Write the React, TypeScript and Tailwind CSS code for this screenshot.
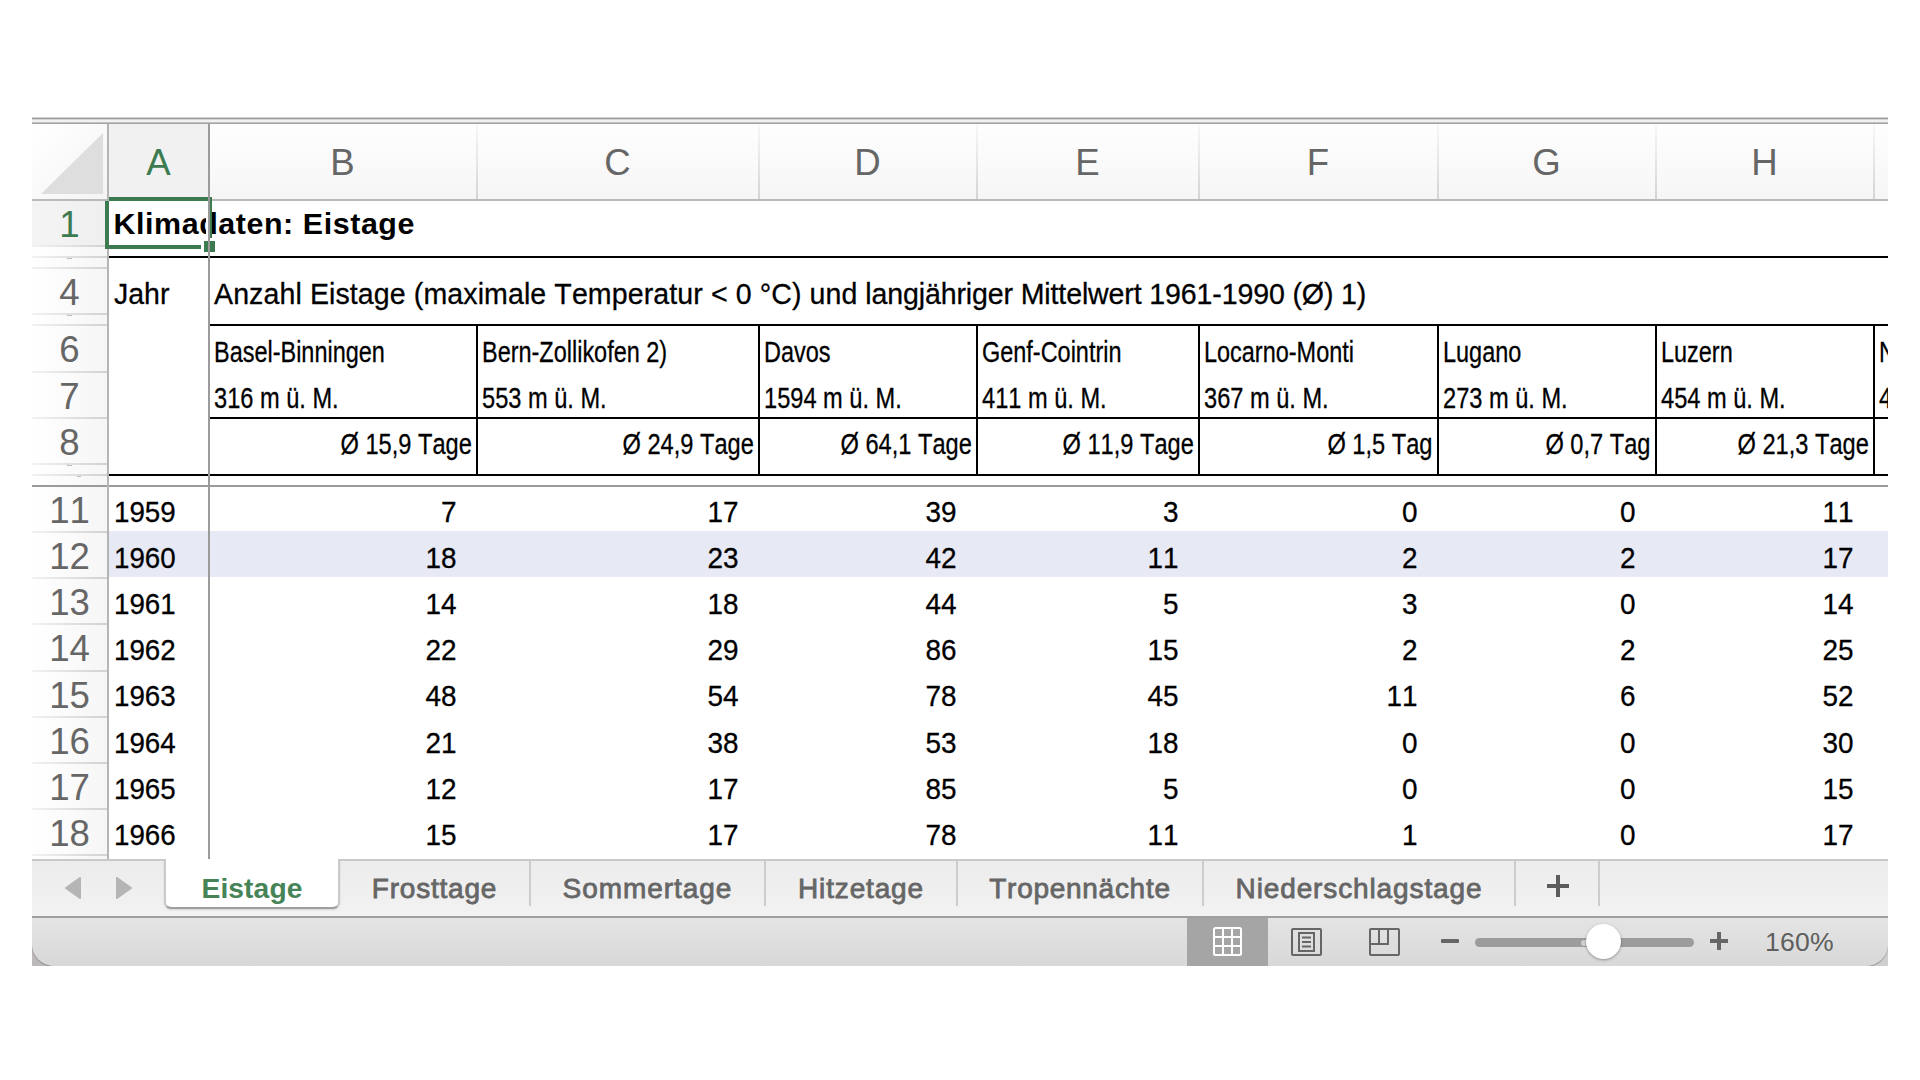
const stations = [
  { col: "B", name: "Basel-Binningen", alt: "316 m ü. M.", mean: "Ø 15,9 Tage", w: "w-[268px]", values: [7, 18, 14, 22, 48, 21, 12, 15] },
  { col: "C", name: "Bern-Zollikofen 2)", alt: "553 m ü. M.", mean: "Ø 24,9 Tage", w: "w-[282px]", values: [17, 23, 18, 29, 54, 38, 17, 17] },
  { col: "D", name: "Davos", alt: "1594 m ü. M.", mean: "Ø 64,1 Tage", w: "w-[218px]", values: [39, 42, 44, 86, 78, 53, 85, 78] },
  { col: "E", name: "Genf-Cointrin", alt: "411 m ü. M.", mean: "Ø 11,9 Tage", w: "w-[222px]", values: [3, 11, 5, 15, 45, 18, 5, 11] },
  { col: "F", name: "Locarno-Monti", alt: "367 m ü. M.", mean: "Ø 1,5 Tag", w: "w-[239px]", values: [0, 2, 3, 2, 11, 0, 0, 1] },
  { col: "G", name: "Lugano", alt: "273 m ü. M.", mean: "Ø 0,7 Tag", w: "w-[218px]", values: [0, 2, 0, 2, 6, 0, 0, 0] },
  { col: "H", name: "Luzern", alt: "454 m ü. M.", mean: "Ø 21,3 Tage", w: "w-[218px]", values: [11, 17, 14, 25, 52, 30, 15, 17] },
];

const years = [1959, 1960, 1961, 1962, 1963, 1964, 1965, 1966];

const tabs = [
  { label: "Frosttage", w: "w-[191px]", track: "tracking-[0.8px]" },
  { label: "Sommertage", w: "w-[235px]", track: "tracking-[0.95px]" },
  { label: "Hitzetage", w: "w-[192px]", track: "tracking-[0.85px]" },
  { label: "Tropennächte", w: "w-[246px]", track: "tracking-[0.72px]" },
  { label: "Niederschlagstage", w: "w-[312px]", track: "tracking-[0.88px]" },
];

const headFill = "bg-linear-to-b from-[#fefefe] to-[#f6f6f6]";

function RowNumber({ n, active, last, mark }: { n?: number; active?: boolean; last?: boolean; mark?: boolean }) {
  const size = n === undefined ? "h-[11px]" : n > 8 ? "h-[46.14px]" : n === 6 ? "h-[47px]" : "h-[46px]";
  const fill = active ? "bg-linear-to-r from-[#f4f4f4] to-[#efefef] text-[#3c7b4f]" : "bg-linear-to-r from-white to-[#f6f6f6] text-[#666]";
  return (
    <div className={`${size} ${fill} flex shrink-0 flex-col text-center text-[36.6px] leading-[47.5px]`}>
      <div className="min-h-0 flex-1 overflow-visible">
        {n}
        {mark && <div className="mx-auto h-px w-[5px] bg-[#bdbdbd]" />}
      </div>
      {!last && <div className="h-[2px] shrink-0 bg-linear-to-r from-[#f2f2f2] to-[#d2d2d2]" />}
    </div>
  );
}

function DataRows({ values, year }: { values: number[]; year?: boolean }) {
  return (
    <>
      {values.map((v, i) => (
        <div
          key={i}
          className={`${i === 0 ? "h-[44px] pt-[2px]" : "h-[46.14px] pt-[4px]"} ${i === 1 ? "bg-[#e7e9f5]" : ""} ${
            year ? "pl-[5px]" : "pr-[21.5px] text-right"
          } shrink-0 text-[30px] leading-[46px] [-webkit-text-stroke:0.3px_#000]`}
        >
          <div className={year ? "origin-left scale-x-[.925]" : "origin-right scale-x-[.93]"}>{v}</div>
        </div>
      ))}
    </>
  );
}

function StationHead({ name, alt, mean }: { name: string; alt: string; mean: string }) {
  return (
    <div className="flex h-[150px] flex-col overflow-hidden border-b-2 border-black text-[30px] leading-[46px] whitespace-nowrap [-webkit-text-stroke:0.3px_#000]">
      <div className="h-[93px] shrink-0 border-b-2 border-black pt-[3px] pl-[4px]">
        <div className="origin-left scale-x-[.782]">{name}</div>
        <div className="origin-left scale-x-[.787]">{alt}</div>
      </div>
      <div className="flex justify-end pt-[2px] pr-[4.5px]">
        <div className="origin-right scale-x-[.787]">{mean}</div>
      </div>
    </div>
  );
}

function Sheet() {
  return (
    <div className="flex h-[735px] overflow-hidden">
      {/* row numbers */}
      <div className="flex w-[75px] shrink-0 flex-col">
        <div className="flex h-[75px] shrink-0 justify-end bg-linear-to-br from-white to-[#f4f4f4] pt-[9px] pr-[4px]">
          <svg width="62" height="61" viewBox="0 0 62 61">
            <path d="M62 0V61H0Z" fill="#dedede" />
          </svg>
        </div>
        <div className="h-[2px] shrink-0 bg-[#bababa]" />
        <RowNumber n={1} active />
        <RowNumber />
        <RowNumber mark />
        <RowNumber n={4} />
        <RowNumber mark />
        <RowNumber n={6} />
        <RowNumber n={7} />
        <RowNumber n={8} />
        <RowNumber mark />
        <div className="h-[9px] shrink-0 bg-linear-to-r from-white to-[#f6f6f6] pl-[45px]">
          <div className="h-px w-[4px] bg-[#bdbdbd]" />
        </div>
        <div className="h-[2px] shrink-0 bg-[#9b9b9b]" />
        {years.map((y, i) => (
          <RowNumber key={y} n={11 + i} />
        ))}
        <RowNumber last />
      </div>
      <div className="w-[2px] shrink-0 bg-[#b5b5b5]" />

      {/* column A */}
      <div className="relative flex w-[99px] shrink-0 flex-col">
        <div className="h-[75px] shrink-0 bg-[#f1f1f1] text-center text-[36.6px] leading-[78px] text-[#3c7b4f]">A</div>
        <div className="h-[2px] shrink-0 bg-[#bababa]" />
        <div className="h-[57px] shrink-0 border-b-2 border-black">
          <div className="relative z-10 w-[400px] pl-[4.5px] text-[30.4px] leading-[45px] font-bold tracking-[0.58px] whitespace-nowrap">
            Klimadaten: Eistage
          </div>
        </div>
        <div className="h-[218px] shrink-0 border-b-2 border-black pt-[13px] pl-[4.5px] text-[30px] leading-[46px] [-webkit-text-stroke:0.3px_#000]">
          <div className="origin-left scale-x-[.95]">Jahr</div>
        </div>
        <div className="h-[9px] shrink-0" />
        <div className="h-[2px] shrink-0 bg-[#9b9b9b]" />
        <DataRows values={years} year />

        {/* cell selection */}
        <div className="absolute top-[73px] -left-[4px] z-20 h-[55px] w-[110px]">
          <div className="absolute top-0 left-[4px] h-[4px] w-[103px] bg-[#3c7b4f]" />
          <div className="absolute top-[4px] left-0 h-[48px] w-[4px] bg-[#3c7b4f]" />
          <div className="absolute top-[48px] left-0 h-[4px] w-[96px] bg-[#3c7b4f]" />
          <div className="absolute top-[4px] left-[101px] h-[38px] w-[2px] bg-white" />
          <div className="absolute top-0 left-[105px] h-[41px] w-[2px] bg-[#3c7b4f]" />
          <div className="absolute top-[44px] left-[99px] h-[11px] w-[11px] bg-[#3c7b4f]" />
          <div className="absolute top-0 left-[103px] h-[55px] w-[2px] bg-[#9b9b9b]" />
        </div>
      </div>
      <div className="w-[2px] shrink-0 bg-[#9b9b9b]" />

      {/* scrolling columns */}
      <div className="flex min-w-0 flex-1 flex-col overflow-hidden">
        <div className="flex h-[75px] shrink-0">
          {stations.map((s) => (
            <div key={s.col} className={`${s.w} ${headFill} flex shrink-0`}>
              <div className="flex-1 pr-px text-center text-[36.6px] leading-[78px] text-[#666]">{s.col}</div>
              <div className="w-[2px] bg-linear-to-b from-[#f8f8f8] to-[#d4d4d4]" />
            </div>
          ))}
          <div className={`flex-1 ${headFill}`} />
        </div>
        <div className="h-[2px] shrink-0 bg-[#bababa]" />
        <div className="h-[57px] shrink-0 border-b-2 border-black" />
        <div className="h-[68px] shrink-0 border-b-2 border-black pt-[13px] pl-[4px] text-[30px] leading-[46px] whitespace-nowrap [-webkit-text-stroke:0.3px_#000]">
          <div className="origin-left scale-x-[.951]">
            <span className="tracking-[0.11px]">Anzahl Eistage (maximale Temperatur &lt; 0 °C) und</span>
            <span className="tracking-[-0.13px]"> langjähriger Mittelwert 1961-1990 (Ø) 1)</span>
          </div>
        </div>
        <div className="flex h-[150px] shrink-0">
          {stations.map((s) => (
            <div key={s.col} className={`${s.w} shrink-0 border-r-2 border-black`}>
              <StationHead name={s.name} alt={s.alt} mean={s.mean} />
            </div>
          ))}
          <div className="min-w-0 flex-1 overflow-hidden">
            <StationHead name="N" alt="4" mean="" />
          </div>
        </div>
        <div className="h-[9px] shrink-0" />
        <div className="h-[2px] shrink-0 bg-[#9b9b9b]" />
        <div className="flex">
          {stations.map((s) => (
            <div key={s.col} className={`${s.w} flex shrink-0 flex-col`}>
              <DataRows values={s.values} />
            </div>
          ))}
          <div className="flex-1 pt-[44px]">
            <div className="h-[46.14px] bg-[#e7e9f5]" />
          </div>
        </div>
      </div>
    </div>
  );
}

function TabBar() {
  return (
    <div className="flex h-[57px] bg-linear-to-b from-[#ececec] to-[#f2f2f2]">
      <div className="flex w-[132px] gap-[35px] border-t-2 border-[#c9c9c9] pt-[16px] pl-[33px]">
        <svg width="16" height="22" viewBox="0 0 16 22">
          <path d="M15 1V21L1 11Z" fill="#b5b5b5" stroke="#b5b5b5" strokeWidth="2" strokeLinejoin="round" />
        </svg>
        <svg width="16" height="22" viewBox="0 0 16 22">
          <path d="M1 1V21L15 11Z" fill="#b5b5b5" stroke="#b5b5b5" strokeWidth="2" strokeLinejoin="round" />
        </svg>
      </div>
      <div className="h-[50px] w-[176px] rounded-b-[7px] border-x-2 border-b-2 border-x-[#cacaca] border-b-[#9e9e9e] bg-white text-center text-[28.2px] leading-[59px] font-bold tracking-[0.1px] text-[#468458] shadow-[0_1px_2px_rgba(0,0,0,.12)]">
        Eistage
      </div>
      <div className="flex flex-1 border-t-2 border-[#c9c9c9]">
        {tabs.map((t) => (
          <div
            key={t.label}
            className={`${t.w} ${t.track} h-[45px] border-r-2 border-[#cdcdcd] text-center text-[28px] leading-[55px] whitespace-nowrap text-[#666] [-webkit-text-stroke:0.8px_#666]`}
          >
            {t.label}
          </div>
        ))}
        <div className="flex h-[45px] w-[84px] justify-center border-r-2 border-[#cdcdcd] pt-[14px] pl-[2px]">
          <svg width="22" height="22" viewBox="0 0 22 22">
            <path d="M11 0V22M0 11H22" stroke="#5c5c5c" strokeWidth="4" />
          </svg>
        </div>
      </div>
    </div>
  );
}

function StatusBar() {
  return (
    <div className="h-[48px] bg-linear-to-r from-[#bdb9bb] to-[#cfcfcf]">
      <div className="flex h-full items-center rounded-b-[22px] bg-linear-to-b from-[#e4e4e4] to-[#d8d8d8] pl-[1155px] shadow-[0_1px_1px_rgba(90,90,90,.6)]">
        <div className="flex h-full w-[81px] items-center justify-center bg-[#a5a5a5] pr-px pb-px">
          <svg width="29" height="29" viewBox="0 0 29 29" fill="none" stroke="#fff" strokeWidth="2">
            <rect x="1" y="1" width="27" height="27" rx="1.5" />
            <path d="M10 1V28M19 1V28M1 10H28M1 19H28" />
          </svg>
        </div>
        <svg className="mb-px ml-[23px]" width="31" height="28" viewBox="0 0 31 28" fill="none" stroke="#666" strokeWidth="2">
          <rect x="1" y="1" width="29" height="26" rx="1" />
          <rect x="8" y="5" width="15" height="18" />
          <path d="M11 9.5H20M11 14H20M11 18.5H20" />
        </svg>
        <svg className="mb-px ml-[47px]" width="31" height="28" viewBox="0 0 31 28" fill="none" stroke="#666" strokeWidth="2">
          <rect x="1" y="1" width="29" height="26" rx="1" />
          <path d="M1 16H19V1M10 1V16" />
        </svg>
        <div className="mb-[2px] ml-[41px] h-[4px] w-[18px] rounded-[1px] bg-[#666]" />
        <div className="relative ml-[16px] h-[9px] w-[219px] rounded-full bg-[#9c9c9c]">
          <div className="absolute top-[2px] left-[106px] h-[6px] w-[8px] rounded-full bg-[#d0d0d0]" />
          <div className="absolute -top-[14px] left-[111px] h-[35px] w-[35px] rounded-full bg-white shadow-[0_1px_3px_rgba(0,0,0,.35)]" />
        </div>
        <svg className="mb-[2px] ml-[16px]" width="18" height="18" viewBox="0 0 18 18">
          <path d="M9 0V18M0 9H18" stroke="#666" strokeWidth="4" />
        </svg>
        <div className="ml-[37px] text-[26.6px] leading-[48px] tracking-[0.2px] text-[#5e5e5e]">160%</div>
      </div>
    </div>
  );
}

export default function App() {
  return (
    <div className="h-[1080px] w-[1920px] overflow-hidden bg-white px-[32px] pt-[117px] font-['Liberation_Sans',Arial,sans-serif] text-black [font-kerning:none]">
      <div className="w-[1856px] overflow-hidden">
        <div className="h-px bg-[#d0d0d0]" />
        <div className="h-px bg-[#9c9c9c]" />
        <div className="h-px bg-[#d4d4d4]" />
        <div className="h-[2px] bg-[#f1f1f1]" />
        <div className="h-px bg-[#c2c2c2]" />
        <div className="h-px bg-[#a2a2a2]" />
        <Sheet />
        <TabBar />
        <div className="h-[2px] bg-[#9f9f9f]" />
        <StatusBar />
      </div>
    </div>
  );
}
